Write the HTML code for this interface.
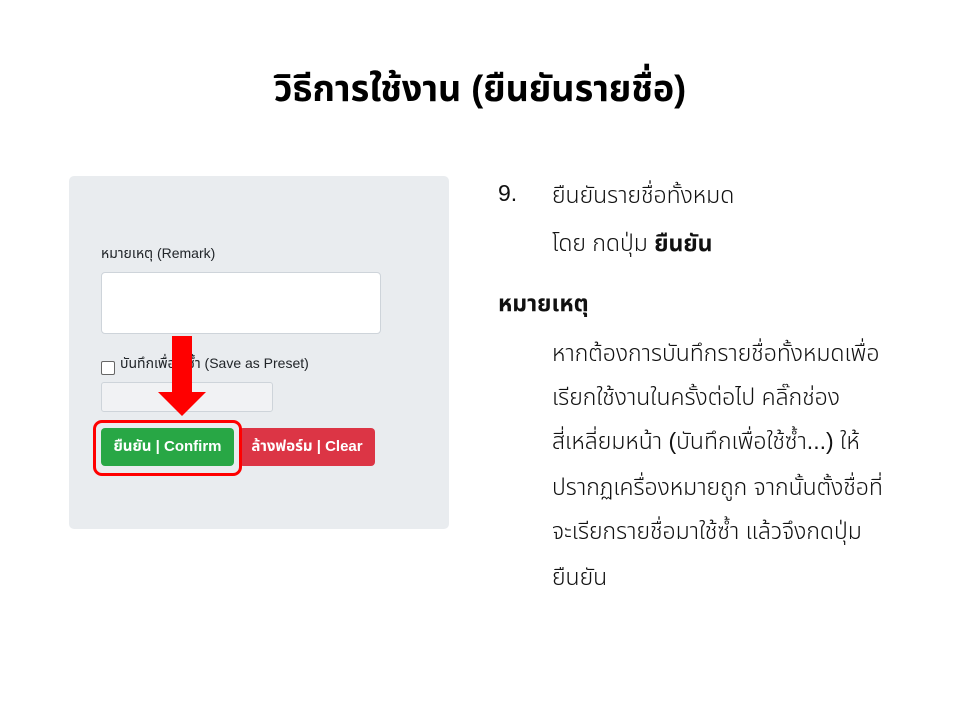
<!DOCTYPE html>
<html><head><meta charset="utf-8"><style>
body{margin:0;width:960px;height:720px;background:#fff;position:relative;overflow:hidden;font-family:"Liberation Sans","Noto Sans Thai","Tahoma",sans-serif;}
.t{position:absolute;white-space:nowrap;}
#title{left:0;width:960px;top:64px;text-align:center;font-size:36px;font-weight:bold;color:#000;}
.card{position:absolute;left:69px;top:176px;width:380px;height:353px;background:#e9ecef;border-radius:5px;}
.r{font-size:23px;color:#111;font-weight:300;}
</style></head><body>
<div class="t" id="title">วิธีการใช้งาน (ยืนยันรายชื่อ)</div>
<div class="card"></div>
<div class="t" style="left:101px;top:244px;font-size:14px;color:#212529">หมายเหตุ (Remark)</div>
<div style="position:absolute;left:101px;top:272px;width:278px;height:60px;background:#fff;border:1px solid #ced4da;border-radius:4px"></div>
<div style="position:absolute;left:101px;top:361px;width:12px;height:12px;border:1px solid #666;border-radius:2px;background:#fff"></div>
<div class="t" style="left:120px;top:354px;font-size:14px;color:#212529">บันทึกเพื่อใช้ซ้ำ (Save as Preset)</div>
<div style="position:absolute;left:101px;top:382px;width:170px;height:28px;background:#f1f2f4;border:1px solid #ced4da;border-radius:3px"></div>
<div style="position:absolute;left:101px;top:428px;width:133px;height:38px;background:#28a745;border-radius:4px;color:#fff;font-size:15px;font-weight:bold;line-height:38px;text-align:center">ยืนยัน | Confirm</div>
<div style="position:absolute;left:239px;top:428px;width:136px;height:38px;background:#dc3545;border-radius:4px;color:#fff;font-size:15px;font-weight:bold;line-height:38px;text-align:center">ล้างฟอร์ม | Clear</div>
<div style="position:absolute;left:93px;top:420px;width:143px;height:50px;border:3px solid #f00;border-radius:9px"></div>
<div style="position:absolute;left:172px;top:336px;width:20px;height:57px;background:#f00"></div>
<div style="position:absolute;left:158px;top:392px;width:0;height:0;border-left:24px solid transparent;border-right:24px solid transparent;border-top:24px solid #f00"></div>
<div class="t r" style="left:498px;top:180px">9.</div>
<div class="t r" style="left:552px;top:180px">ยืนยันรายชื่อทั้งหมด</div>
<div class="t r" style="left:552px;top:228px">โดย กดปุ่ม <b style="font-weight:bold">ยืนยัน</b></div>
<div class="t r" style="left:498px;top:288px;font-weight:bold">หมายเหตุ</div>
<div class="t r" style="left:552px;top:338px">หากต้องการบันทึกรายชื่อทั้งหมดเพื่อ</div>
<div class="t r" style="left:552px;top:382px">เรียกใช้งานในครั้งต่อไป คลิ๊กช่อง</div>
<div class="t r" style="left:552px;top:426px">สี่เหลี่ยมหน้า (บันทึกเพื่อใช้ซ้ำ...) ให้</div>
<div class="t r" style="left:552px;top:472px">ปรากฏเครื่องหมายถูก จากนั้นตั้งชื่อที่</div>
<div class="t r" style="left:552px;top:516px">จะเรียกรายชื่อมาใช้ซ้ำ แล้วจึงกดปุ่ม</div>
<div class="t r" style="left:552px;top:562px">ยืนยัน</div>
</body></html>
